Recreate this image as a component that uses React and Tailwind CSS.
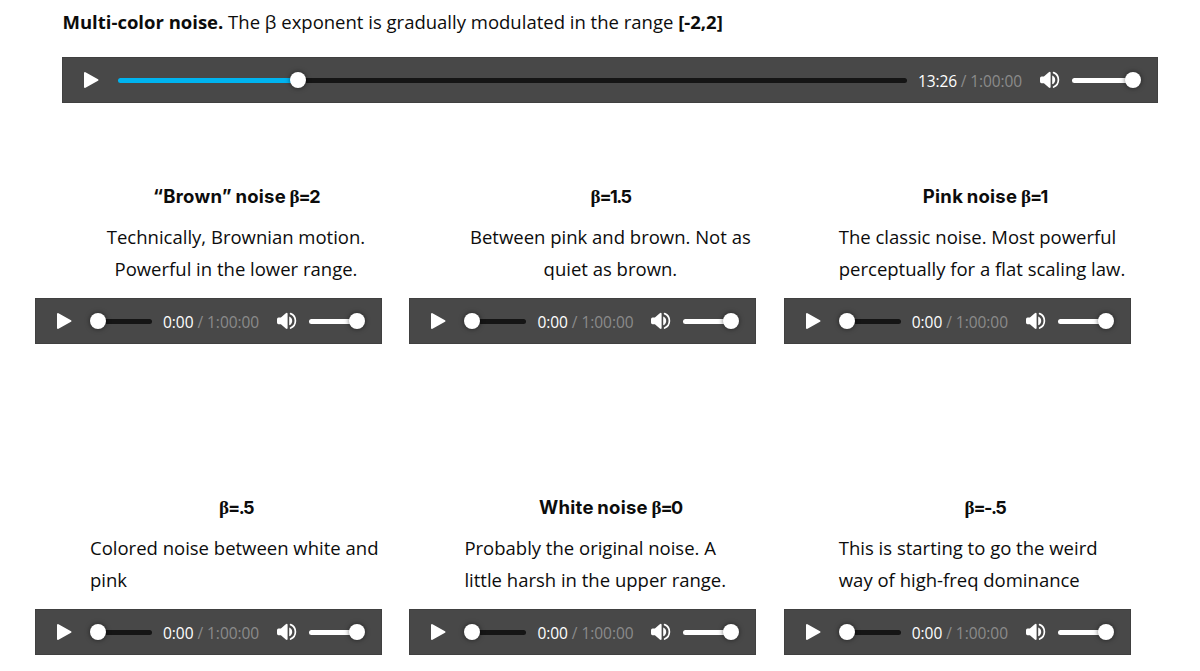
const sounds = [
  { name: "“Brown” noise", beta: "=2", lines: ["Technically, Brownian motion.", "Powerful in the lower range."], centered: true },
  { name: "", beta: "=1.5", lines: ["Between pink and brown. Not as", "quiet as brown."], centered: true },
  { name: "Pink noise", beta: "=1", lines: ["The classic noise. Most powerful", "perceptually for a flat scaling law."] },
  { name: "", beta: "=.5", lines: ["Colored noise between white and", "pink"] },
  { name: "White noise", beta: "=0", lines: ["Probably the original noise. A", "little harsh in the upper range."] },
  { name: "", beta: "=-.5", lines: ["This is starting to go the weird", "way of high-freq dominance"] },
];

function Knob() {
  return <span className="z-10 h-4 w-4 shrink-0 rounded-full bg-white shadow-[0_0_5px_rgba(0,0,0,0.55)]" />;
}

function PlayIcon() {
  return (
    <svg className="h-[18px] w-4 shrink-0" viewBox="0 0 16 18" fill="white" stroke="white" strokeWidth="2" strokeLinejoin="round">
      <path d="M2 2v14L14.5 9z" />
    </svg>
  );
}

function VolumeIcon() {
  return (
    <svg className="h-[18px] w-5 shrink-0" viewBox="0 0 20 18" fill="none">
      <path d="M0 7.2 Q0 5.7 1.5 5.6 H3.9 L8.8 1.2 Q10.4 .2 10.6 1.8 V15.9 Q10.4 17.5 8.8 16.5 L3.9 12.2 H1.5 Q0 12 0 10.5z" fill="white" />
      <path d="M12.2 4.4 C16.2 5.6 16.2 12 12.2 13.2z" fill="white" />
      <path d="M13.6 1.6 C20 4.2 20 13.5 13.6 16" stroke="white" strokeWidth="1.7" strokeLinecap="round" />
    </svg>
  );
}

function Player({ time = "0:00", progress = 0, wide = false }) {
  return (
    <div className="flex h-[46px] items-center border border-[#404040] bg-[#484848] pr-4 pl-5">
      <PlayIcon />
      <div className={wide ? "ml-[19px] flex flex-1 items-center" : "ml-[18px] flex flex-1 items-center"}>
        {progress > 0 && (
          <span className="-mr-1 h-[5px] rounded-full bg-[#00b4f0]" style={{ width: `${progress}%` }} />
        )}
        <Knob />
        <span className="-ml-1 h-[5px] flex-1 rounded-r-full bg-[#151515]" />
      </div>
      <div
        className={
          wide
            ? "mt-[3px] ml-[11px] w-[122px] text-[15.5px] tracking-[-0.12px] whitespace-nowrap text-[#8b8b8b]"
            : "mt-[3px] ml-[11px] w-[114px] text-[15.5px] tracking-[-0.05px] whitespace-nowrap text-[#8b8b8b]"
        }
      >
        <span className="text-white">{time}</span> / 1:00:00
      </div>
      <VolumeIcon />
      <div className={wide ? "ml-3 flex w-[69px] items-center" : "ml-3 flex w-14 items-center"}>
        <span className="-mr-1 h-[5px] flex-1 rounded-l-full bg-white" />
        <Knob />
      </div>
    </div>
  );
}

function Sound({ name, beta, lines, centered }) {
  return (
    <section>
      <div className="flex h-[119px] flex-col items-center pl-[55px]">
        <h3 className="h-[42px] font-[Inter] text-[18.5px] leading-[34px] font-bold whitespace-nowrap">
          {name && <span className="tracking-[0.25px] [word-spacing:-1px]">{name} </span>}
          <span className="font-['Liberation_Serif'] text-[19px] tracking-[-1px]">β</span>
          <span className="text-[18px] tracking-[-1.6px]">{beta}</span>
        </h3>
        <p className={centered ? "w-full text-center" : "w-full"}>
          {lines.map((line) => (
            <span key={line} className="block whitespace-nowrap">
              {line}
            </span>
          ))}
        </p>
      </div>
      <Player />
    </section>
  );
}

export default function App() {
  return (
    <main className="h-[671px] overflow-hidden bg-white font-['Open_Sans',sans-serif] text-[18.5px] leading-[32.4px] text-[#0c0c0c]">
      <div className="pr-[42px] pl-[62px]">
        <p className="h-[57px] pt-1.5 pl-[0.5px]">
          <strong className="font-bold">Multi-color noise.</strong> The β exponent is gradually modulated in the range{" "}
          <strong className="font-bold">[-2,2]</strong>
        </p>
        <Player time="13:26" progress={22.3} wide />
      </div>
      <div className="mt-[76px] grid w-[1131px] grid-cols-[347px_347px_347px] gap-x-[27.4px] gap-y-[146px] pl-[35px]">
        {sounds.map((sound) => (
          <Sound key={sound.beta} {...sound} />
        ))}
      </div>
    </main>
  );
}
